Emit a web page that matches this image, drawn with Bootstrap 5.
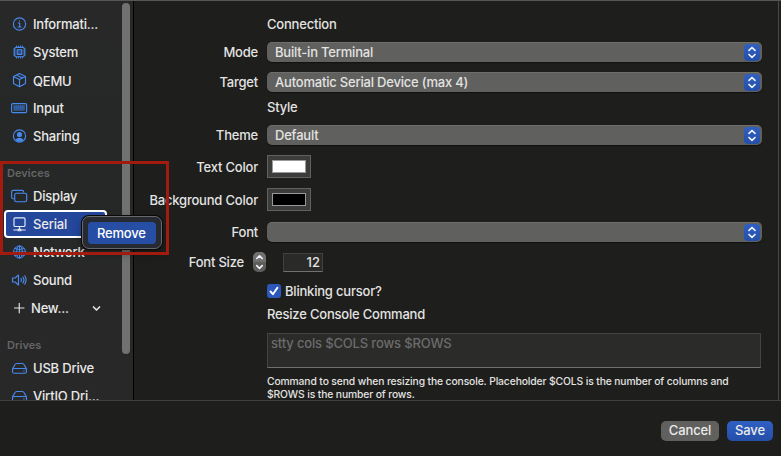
<!DOCTYPE html>
<html lang="en" data-bs-theme="dark">
<head>
<meta charset="utf-8">
<meta name="viewport" content="width=device-width, initial-scale=1">
<title>Serial settings</title>
<link href="https://cdn.jsdelivr.net/npm/bootstrap@5.3.0/dist/css/bootstrap.min.css" rel="stylesheet">
<style>
body{font:500 13px/20px Inter,"Liberation Sans",sans-serif;letter-spacing:-.2px;color:#e3e3e2;background:#1e1e1c;height:456px;overflow:hidden}
.upper{height:401px;border-top:1px solid #565654;border-bottom:1px solid #404040}
.side{width:134px;border-right:1px solid #000;background:linear-gradient(#282828,#252827 40%,#282828 75%)}
.side-list{width:122px;padding-top:9px}
.side-item{height:28px;padding-left:11px;letter-spacing:-.2px;color:#e9e9e9}
.side-item svg{width:17px;height:16px;margin-right:5px;overflow:visible}
.side-item.qemu{padding-top:2px}
.side-item.qemu svg{margin-bottom:3px}
.side-head{height:32px;padding:13px 0 0 7px;font-size:11px;line-height:20px;font-weight:600;color:#646566;letter-spacing:.05px}
.ic{fill:none;stroke:#4889ee;stroke-width:1.15;stroke-linecap:round;stroke-linejoin:round}
.ic.thin{stroke-width:1}
.ic.pale{stroke:#e3e3e2}
.ic.chev{stroke-width:1.7;margin-right:17px}
.new-label{margin-left:-1px}
.chosen{height:28px;width:103px;margin-left:4px;padding-left:5px;border:2px solid #fff;border-radius:4px;background:#24479c}
.chosen .ic{stroke:#e6ebf5}
.thumb{width:8px;height:351px;margin-top:2px;border-radius:4px;background:#717171}
.pane{border-right:1px solid #484846;padding-top:14px;margin-right:2px}
.line{height:20px;margin-top:10px}
.lab{width:124px;margin-right:9px;text-align:right;white-space:nowrap}
.lab.short{width:110px}
.head{height:19px;line-height:19px;margin-left:133px}
.head.style-head{margin-top:6px}
.head.resize-head{margin-top:5px}
.line.font-line{margin-top:11px}
.line.check-line{height:18px;margin-left:133px}
.pop{width:495px;height:20px;border-radius:5px;background:#60605e;border-top:1px solid #6e6e6c;padding:0 2px 0 8px;line-height:17px;box-shadow:0 1px 1px #111}
.pop b{font-weight:500;height:19px;line-height:18px}
.knob{width:16px;height:17px;border-radius:4px;background:linear-gradient(#3060c4,#244ea8)}
.knob svg,.step svg{display:block;fill:none;stroke:#f0f3fa;stroke-width:1.7;stroke-linecap:round;stroke-linejoin:round}
.well{width:44px;height:23px;border:1px solid #616160;background:#3c3c3b;padding:4px}
.well span{display:block;height:13px;border:1px solid #999}
.step{width:13px;height:20px;border-radius:5px;background:linear-gradient(#70706e 50%,#5d5d5b 50%)}
.num{width:40px;height:19px;margin-left:17px;background:#2a2a29;border:1px solid #414140;border-bottom-color:#70706e;text-align:right;padding-right:2px;line-height:17px;letter-spacing:0}
.tick{width:14px;height:14px;border-radius:3px;background:#2c58bc;margin-right:4px}
.tick svg{display:block;fill:none;stroke:#fff;stroke-width:1.9;stroke-linecap:round;stroke-linejoin:round}
.area{width:494px;height:35px;margin:9px 0 0 133px;border:1px solid #444443;border-bottom-color:#70706e;background:#2b2b2a;color:#6b6b6a;padding:0 3px;line-height:19px;letter-spacing:-.16px}
.hint{margin:7px 0 0 133px;width:490px;font-size:10.3px;line-height:13px;letter-spacing:-.11px}
.foot{height:55px;padding:20px 8px 0 0}
.foot .btn{--bs-btn-border-width:0;height:20px;font:500 13px/19px Inter,sans-serif;letter-spacing:-.1px;color:#ebebea;border-radius:5px;padding:0 0 1px}
.foot .b-cancel,.foot .b-cancel:hover{width:58px;background:#60605e}
.foot .b-save,.foot .b-save:hover{width:46px;background:linear-gradient(#3060c4,#244ea8)}
.context{left:82px;top:216px;width:80px;height:33px;padding:5px;border-radius:7px;background:#282a31;border:1px solid #68696c;box-shadow:0 0 0 1px #0a0a0a,0 4px 8px #0006}
.context span{display:block;height:22px;line-height:23px;border-radius:4px;background:#274ea5;color:#fff;padding-left:9px}
.frame{left:0;top:161px;width:169px;height:94px;border:3px solid #a31a0f;pointer-events:none}
</style>
<script src="https://cdn.jsdelivr.net/npm/bootstrap@5.3.0/dist/js/bootstrap.bundle.min.js"></script>
</head>
<body class="position-relative">
<div class="upper d-flex overflow-hidden">
<aside class="side d-flex flex-shrink-0 overflow-hidden">
<div class="side-list flex-shrink-0 text-nowrap">
<div class="side-item d-flex align-items-center"><svg class="ic" viewBox="0 0 17 16"><circle cx="8.5" cy="8" r="6.1"/><path d="M7.3 7h1.4v4M7 11h3.2M8.5 4.8v.2"/></svg>Informati...</div>
<div class="side-item d-flex align-items-center"><svg class="ic" viewBox="0 0 17 16"><rect x="3.8" y="3.3" width="9.4" height="9.4" rx="1.5"/><rect x="6.2" y="5.7" width="4.6" height="4.6" fill="#2c4b80"/><path d="M5.5 3V2M7.5 3V2M9.5 3V2M11.5 3V2M5.5 13v1M7.5 13v1M9.5 13v1M11.5 13v1M3.5 5h-1M3.5 7h-1M3.5 9h-1M3.5 11h-1M13.5 5h1M13.5 7h1M13.5 9h1M13.5 11h1" stroke-width=".9"/></svg>System</div>
<div class="side-item qemu d-flex align-items-center"><svg class="ic" viewBox="0 0 17 16"><path d="m8.5 1.5 6 3v7l-6 3.2-6-3.2v-7zM2.5 4.6l6 3 6-3M8.5 7.6v7M5.4 3.1l6.1 3"/></svg>QEMU</div>
<div class="side-item d-flex align-items-center"><svg class="ic" viewBox="0 0 17 16"><rect x=".6" y="3.6" width="15" height="9" rx="1.2"/><path d="M2.4 8.100h11.400" stroke="#2f5690" stroke-linecap="butt" stroke-width="5.600"/><path d="M3 6h10.500M3 8h10.500" stroke-dasharray="1.200 .8" stroke-linecap="butt" stroke="#3c70c2" stroke-width="1.200"/></svg>Input</div>
<div class="side-item d-flex align-items-center"><svg class="ic" viewBox="0 0 17 16"><circle cx="8.5" cy="8" r="6.1"/><circle cx="8.5" cy="6.5" r="2" fill="#4889ee"/><path d="M4.6 12c1.4-3 6.4-3 7.8 0-2 2.2-5.8 2.2-7.8 0z" fill="#4889ee" stroke="none"/></svg>Sharing</div>
<div class="side-head">Devices</div>
<div class="side-item d-flex align-items-center"><svg class="ic" viewBox="0 0 17 16"><path d="M2.7 10.7h-.5Q.6 10.7.6 9V4Q.6 2.3 2.2 2.3H11Q12.700 2.3 12.700 4"/><rect x="3.7" y="5.2" width="12" height="8.5" rx="1.7"/></svg>Display</div>
<div class="side-item chosen d-flex align-items-center"><svg class="ic" viewBox="0 0 17 16"><rect x="3" y="1.8" width="11" height="8.7" rx="1"/><path d="M8.500 10.500v3M2.800 14h4.200M10 14h4.200M7.200 13.300h2.600v1.400H7.200z"/></svg>Serial</div>
<div class="side-item d-flex align-items-center"><svg class="ic thin" viewBox="0 0 17 16"><circle cx="8.5" cy="8" r="6"/><ellipse cx="8.5" cy="8" rx="2.9" ry="6"/><path d="M2.500 8h12M8.500 2v12M3.800 4.500Q8.500 7 13.200 4.500M3.800 11.500Q8.500 9 13.200 11.500"/></svg>Network</div>
<div class="side-item d-flex align-items-center"><svg class="ic" viewBox="0 0 17 16"><path d="M1.500 6H4L7.500 3v10L4 10H1.500zM10 6.400q1 1.600 0 3.200M12 5q1.900 3 0 6M13.800 3.800q2.500 4.200 0 8.400"/></svg>Sound</div>
<div class="side-item d-flex align-items-center"><svg class="ic pale me-1" viewBox="0 0 17 16"><path d="M3.500 8h9.500M8.250 3.300v9.500"/></svg><span class="new-label">New...</span><svg class="ic pale chev ms-auto" viewBox="0 0 17 16"><path d="m5.500 7 3 3 3-3"/></svg></div>
<div class="side-head">Drives</div>
<div class="side-item d-flex align-items-center"><svg class="ic" viewBox="0 0 17 16"><path d="m1.500 9 2.200-4Q4.300 3.500 6 3.500h5q1.700 0 2.300 1.500l2.200 4"/><rect x="1.500" y="8.500" width="14" height="4.700" rx="1.800"/><path d="M12.800 10.900h.2"/></svg>USB Drive</div>
<div class="side-item d-flex align-items-center"><svg class="ic" viewBox="0 0 17 16"><path d="m1.500 9 2.200-4Q4.300 3.500 6 3.500h5q1.700 0 2.300 1.500l2.200 4"/><rect x="1.500" y="8.500" width="14" height="4.700" rx="1.800"/><path d="M12.800 10.900h.2"/></svg>VirtIO Dri...</div>
</div>
<div class="thumb flex-shrink-0"></div>
</aside>
<main class="pane flex-grow-1">
<div class="head">Connection</div>
<div class="line d-flex mt-2"><div class="lab">Mode</div><div class="pop d-flex justify-content-between align-items-center"><b>Built-in Terminal</b><span class="knob"><svg width="16" height="17" viewBox="0 0 16 17"><path d="m5 6.300 3-2.800 3 2.800M5 10.500l3 2.800 3-2.800"/></svg></span></div></div>
<div class="line d-flex"><div class="lab">Target</div><div class="pop d-flex justify-content-between align-items-center"><b>Automatic Serial Device (max 4)</b><span class="knob"><svg width="16" height="17" viewBox="0 0 16 17"><path d="m5 6.300 3-2.800 3 2.800M5 10.500l3 2.800 3-2.800"/></svg></span></div></div>
<div class="head style-head">Style</div>
<div class="line d-flex mt-2"><div class="lab">Theme</div><div class="pop d-flex justify-content-between align-items-center"><b>Default</b><span class="knob"><svg width="16" height="17" viewBox="0 0 16 17"><path d="m5 6.300 3-2.800 3 2.800M5 10.500l3 2.800 3-2.800"/></svg></span></div></div>
<div class="line h-auto d-flex align-items-center"><div class="lab">Text Color</div><div class="well"><span class="bg-white"></span></div></div>
<div class="line h-auto d-flex align-items-center"><div class="lab">Background Color</div><div class="well"><span class="bg-black"></span></div></div>
<div class="line font-line d-flex"><div class="lab">Font</div><div class="pop d-flex justify-content-end align-items-center"><span class="knob"><svg width="16" height="17" viewBox="0 0 16 17"><path d="m5 6.300 3-2.800 3 2.800M5 10.500l3 2.800 3-2.800"/></svg></span></div></div>
<div class="line d-flex align-items-center"><div class="lab short">Font Size</div><div class="step"><svg width="13" height="20" viewBox="0 0 13 20"><path d="m3.800 6.500 2.700-2.700 2.700 2.700M3.800 13.700l2.700 2.700 2.700-2.700"/></svg></div><div class="num">12</div></div>
<div class="line check-line d-flex align-items-center"><span class="tick"><svg width="14" height="14" viewBox="0 0 14 14"><path d="m3.500 7.500 2.400 2.700 4.500-6.500"/></svg></span>Blinking cursor?</div>
<div class="head resize-head">Resize Console Command</div>
<div class="area">stty cols $COLS rows $ROWS</div>
<div class="hint text-nowrap">Command to send when resizing the console. Placeholder $COLS is the number of columns and<br>$ROWS is the number of rows.</div>
</main>
</div>
<footer class="foot d-flex justify-content-end gap-2"><button class="btn b-cancel" type="button">Cancel</button><button class="btn b-save" type="button">Save</button></footer>
<div class="context position-absolute"><span>Remove</span></div>
<div class="frame position-absolute"></div>
</body>
</html>
